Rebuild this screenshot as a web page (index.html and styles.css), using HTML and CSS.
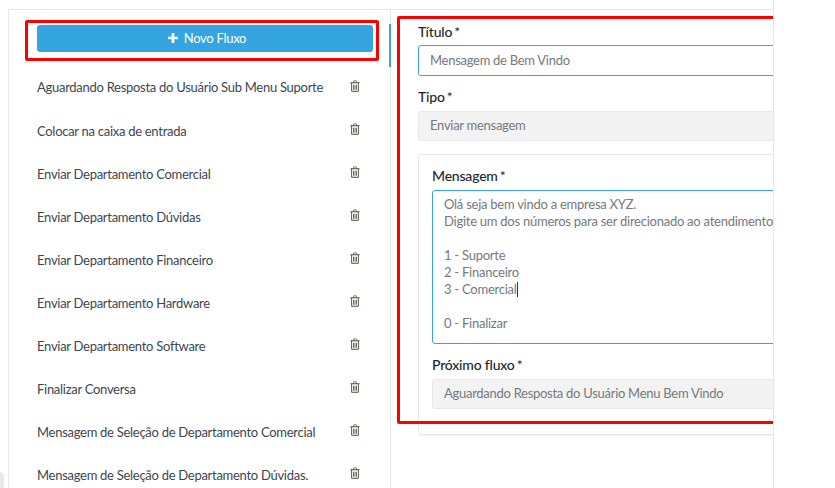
FILE: index.html
```html
<!DOCTYPE html>
<html lang="pt-BR">
<head>
    <meta charset="UTF-8">
    <title>Fluxos</title>
    <link rel="stylesheet" href="styles.css">
</head>
<body>
<div class="corner-tab"></div>
<div class="page">
    <div class="panel">
        <div class="flow-list">
            <div class="new-flow">
                <button class="btn-new">
                    <svg class="icon-plus" viewBox="0 0 11 11"><path d="M4 0h3v4h4v3H7v4H4V7H0V4h4z"/></svg>
                    Novo Fluxo
                </button>
            </div>
            <div class="mark mark-left"></div>
            <ul class="flows">
                <li><span>Aguardando Resposta do Usuário Sub Menu Suporte</span><svg class="icon-trash" viewBox="0 0 11 13"><use href="#trash"/></svg></li>
                <li><span>Colocar na caixa de entrada</span><svg class="icon-trash" viewBox="0 0 11 13"><use href="#trash"/></svg></li>
                <li><span>Enviar Departamento Comercial</span><svg class="icon-trash" viewBox="0 0 11 13"><use href="#trash"/></svg></li>
                <li><span>Enviar Departamento Dúvidas</span><svg class="icon-trash" viewBox="0 0 11 13"><use href="#trash"/></svg></li>
                <li><span>Enviar Departamento Financeiro</span><svg class="icon-trash" viewBox="0 0 11 13"><use href="#trash"/></svg></li>
                <li><span>Enviar Departamento Hardware</span><svg class="icon-trash" viewBox="0 0 11 13"><use href="#trash"/></svg></li>
                <li><span>Enviar Departamento Software</span><svg class="icon-trash" viewBox="0 0 11 13"><use href="#trash"/></svg></li>
                <li><span>Finalizar Conversa</span><svg class="icon-trash" viewBox="0 0 11 13"><use href="#trash"/></svg></li>
                <li><span>Mensagem de Seleção de Departamento Comercial</span><svg class="icon-trash" viewBox="0 0 11 13"><use href="#trash"/></svg></li>
                <li><span>Mensagem de Seleção de Departamento Dúvidas.</span><svg class="icon-trash" viewBox="0 0 11 13"><use href="#trash"/></svg></li>
            </ul>
            <div class="scroll-thumb"></div>
        </div>

        <div class="flow-form">
            <div class="mark mark-right"></div>
            <div class="field field-title">
                <label>Título <em>*</em></label>
                <div class="control focused">Mensagem de Bem Vindo</div>
            </div>
            <div class="field">
                <label>Tipo <em>*</em></label>
                <div class="control disabled">Enviar mensagem</div>
            </div>
            <div class="card">
                <div class="field">
                    <label>Mensagem <em>*</em></label>
                    <div class="message">Olá seja bem vindo a empresa XYZ.
Digite um dos números para ser direcionado ao atendimento

1 - Suporte
2 - Financeiro
3 - Comercial<span class="caret"></span>

0 - Finalizar</div>
                </div>
                <div class="field">
                    <label>Próximo fluxo <em>*</em></label>
                    <div class="control disabled">Aguardando Resposta do Usuário Menu Bem Vindo</div>
                </div>
            </div>
        </div>
    </div>
</div>

<svg class="defs" width="0" height="0">
    <symbol id="trash" viewBox="0 0 11 13">
        <path d="M4 .5h3L7.8 2.5H10.5V3.5H9.7V12a.8.8 0 0 1-.8.8H2.1a.8.8 0 0 1-.8-.8V3.5H.5V2.5H3.2zM4.3 1.4 3.9 2.5H7.1L6.7 1.4zM2.3 3.5V11.8H8.7V3.5zM3.5 5H4.4V10.5H3.5zM5.05 5H5.95V10.5H5.05zM6.6 5H7.5V10.5H6.6z" fill-rule="evenodd"/>
    </symbol>
</svg>
</body>
</html>
```

FILE: styles.css
```css
* {
    box-sizing: border-box;
}

html, body {
    height: 100%;
}

body {
    margin: 0;
    background: #fff;
    font-family: "Lato", sans-serif;
    font-size: 13px;
    letter-spacing: -0.28px;
    color: #3d4650;
    overflow: hidden;
}

.defs {
    position: absolute;
}

.corner-tab {
    position: absolute;
    left: 0;
    bottom: 0;
    width: 4px;
    height: 16px;
    background: #e9e9e9;
    border-top-right-radius: 4px;
}

.page {
    width: 774px;
    height: 488px;
    padding: 9px 0 0 8px;
    border-right: 1px solid #e7e7e7;
    overflow: hidden;
}

.panel {
    display: flex;
    height: 600px;
    border-top: 1px solid #e7e7e7;
    border-left: 1px solid #e7e7e7;
}

.flow-list {
    position: relative;
    width: 382px;
    flex-shrink: 0;
    padding: 15px 0 0 28px;
    border-right: 1px solid #e7e7e7;
}

.new-flow {
    width: 336px;
}

.btn-new {
    display: flex;
    align-items: center;
    justify-content: center;
    gap: 6px;
    width: 100%;
    height: 27px;
    padding: 0 0 1px 4px;
    border: 0;
    border-radius: 3px;
    background: #34a5df;
    color: #fff;
    font-family: inherit;
    font-size: 13px;
    letter-spacing: -0.28px;
}

.icon-plus {
    width: 10px;
    height: 10px;
    fill: #fff;
}

.flows {
    list-style: none;
    margin: 25px 0 0;
    padding: 0;
}

.flows li {
    display: flex;
    justify-content: space-between;
    align-items: flex-start;
    height: 43px;
    padding: 2px 13px 0 0;
    width: 336px;
    line-height: 17px;
}

.flows li + li span {
    margin-top: 1px;
}

.icon-trash {
    width: 10px;
    height: 12px;
    margin-top: 1px;
    fill: #4f4a3e;
}

.scroll-thumb {
    position: absolute;
    top: 14px;
    right: -1px;
    width: 2px;
    height: 43px;
    background: #34a5df;
}

.flow-form {
    position: relative;
    flex: 1;
    padding: 13px 0 0 27px;
    min-width: 0;
}

.field {
    margin-bottom: 13px;
}

.field label {
    display: flex;
    gap: 2px;
    height: 17px;
    margin-bottom: 5px;
    line-height: 16px;
    font-size: 14px;
    font-weight: 500;
    letter-spacing: -0.2px;
    color: #1d2730;
}

.field-title label {
    line-height: 18px;
}

.field em {
    font-style: normal;
    font-weight: 400;
}

.control {
    width: 400px;
    height: 31px;
    padding: 0 11px;
    line-height: 29px;
    border: 1px solid #e7e7e7;
    border-radius: 3px;
    color: #75797e;
}

.control.focused {
    border-color: #34a5df;
}

.control.disabled {
    height: 30px;
    line-height: 27px;
    background: #f3f3f3;
}

.card {
    width: 400px;
    height: 281px;
    padding: 13px 13px 0;
    border: 1px solid #e7e7e7;
    border-radius: 3px;
    box-shadow: 0 1px 1px rgba(0, 0, 0, 0.05);
}

.message {
    width: 400px;
    height: 154px;
    padding: 5px 11px;
    border: 1px solid #34a5df;
    border-radius: 3px;
    line-height: 17px;
    letter-spacing: -0.25px;
    white-space: pre;
    color: #75797e;
}

.caret {
    display: inline-block;
    width: 1px;
    height: 15px;
    background: #333;
    vertical-align: -3px;
}

.mark {
    position: absolute;
    border: 3px solid #f00;
    border-radius: 2px;
    pointer-events: none;
}

.mark-left {
    left: 16px;
    top: 10px;
    width: 354px;
    height: 41px;
}

.mark-right {
    left: 6px;
    top: 6px;
    width: 420px;
    height: 408px;
}
```
